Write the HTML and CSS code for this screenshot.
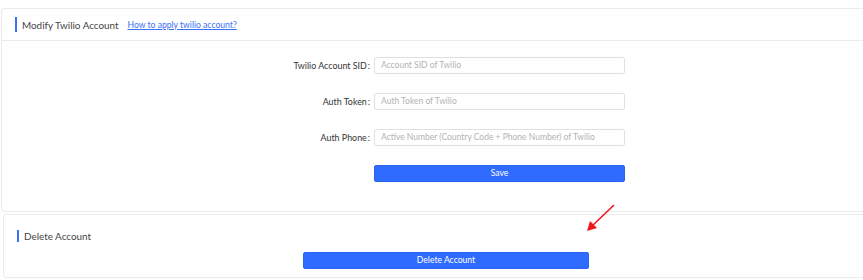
FILE: index.html
```html
<!DOCTYPE html>
<html>
<head>
<meta charset="utf-8">
<link rel="stylesheet" href="styles.css">
</head>
<body>
<div class="page">
  <section class="card card-main">
    <div class="card-head">
      <span class="bar"></span>
      <span class="title">Modify Twilio Account</span>
      <a class="help" href="#">How to apply twilio account?</a>
    </div>
    <div class="card-body">
      <div class="form">
        <label class="lbl">Twilio Account SID<span class="colon">:</span></label>
        <div class="input">Account SID of Twilio</div>
        <label class="lbl">Auth Token<span class="colon">:</span></label>
        <div class="input">Auth Token of Twilio</div>
        <label class="lbl">Auth Phone<span class="colon">:</span></label>
        <div class="input">Active Number (Country Code + Phone Number) of Twilio</div>
        <span></span>
        <button class="btn btn-save">Save</button>
      </div>
    </div>
  </section>
  <section class="card card-delete">
    <div class="del-head">
      <span class="bar bar-sm"></span>
      <span class="title">Delete Account</span>
    </div>
    <div class="del-row">
      <button class="btn btn-delete">Delete Account</button>
    </div>
  </section>
  <svg class="arrow" width="40" height="40" viewBox="0 0 40 40">
    <line x1="36" y1="3" x2="14" y2="24" stroke="#f0171b" stroke-width="1.6"/>
    <polygon points="9,29 12,19 19,26" fill="#f0171b"/>
  </svg>
</div>
</body>
</html>
```

FILE: styles.css
```css
html, body {
  margin: 0;
  padding: 0;
  background: #fff;
}
.page {
  position: relative;
  width: 863px;
  height: 280px;
  overflow: hidden;
  font-family: Lato, "Open Sans", sans-serif;
  color: #333;
}
.card {
  border: 1px solid #ebebeb;
  border-radius: 3px;
  background: #fff;
  box-sizing: border-box;
}
.card-main {
  margin: 8px 0 0 1px;
  width: 880px;
  height: 204px;
}
.card-head {
  height: 31px;
  border-bottom: 1px solid #ebebeb;
  display: flex;
  align-items: center;
  padding-left: 13px;
}
.bar {
  display: inline-block;
  width: 2px;
  height: 15px;
  background: #3a6ff7;
  margin-right: 5px;
}
.bar-sm {
  height: 12px;
}
.title {
  font-size: 9.9px;
  color: #444;
  margin-right: 9px;
}
.help {
  font-size: 8.6px;
  color: #3a6ff7;
  text-decoration: underline;
}
.card-body {
  padding-top: 16px;
}
.form {
  display: grid;
  grid-template-columns: 372px 251px;
  row-gap: 19px;
}
.lbl {
  font-size: 8.9px;
  text-align: right;
  line-height: 17px;
  color: #333;
  white-space: nowrap;
  padding-right: 4px;
}
.colon {
  margin-left: 1px;
}
.input {
  height: 17px;
  box-sizing: border-box;
  border: 1px solid #e0e0e0;
  border-radius: 2px;
  font-size: 8.5px;
  line-height: 15px;
  padding-left: 6px;
  color: #b3b3b3;
  white-space: nowrap;
  overflow: hidden;
}
.btn {
  height: 17px;
  border: 1px solid #2a63f0;
  border-radius: 2px;
  background: #2f6bff;
  color: #fff;
  font-family: Lato, "Open Sans", sans-serif;
  font-size: 8.6px;
  padding: 0;
  line-height: 15px;
}
.card-delete {
  margin: 2px 0 0 3px;
  width: 880px;
  height: 64px;
}
.del-head {
  display: flex;
  align-items: center;
  padding: 14px 0 0 13px;
  height: 13px;
}
.del-row {
  padding: 5px 0 0 299px;
}
.btn-delete {
  width: 286px;
}
.arrow {
  position: absolute;
  left: 578px;
  top: 202px;
}
```
